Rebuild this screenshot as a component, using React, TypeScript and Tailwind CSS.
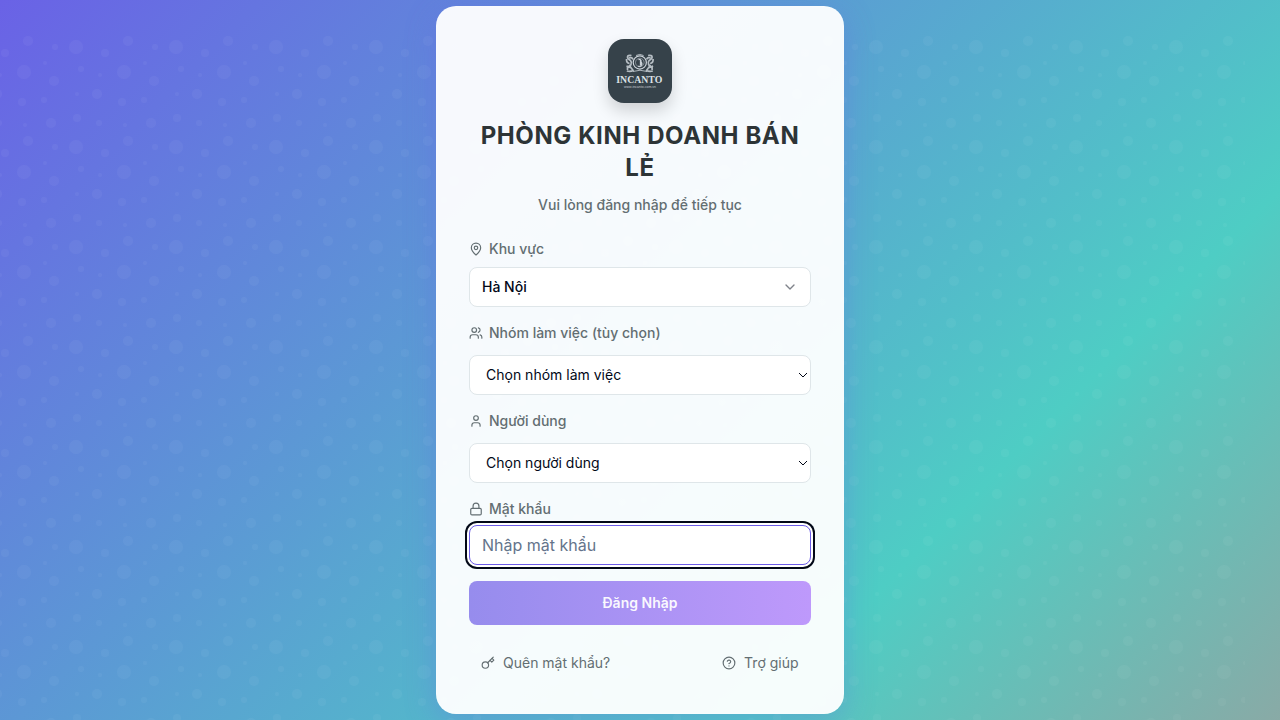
import type { ReactNode } from "react";
import { ChevronDown, CircleHelp, Lock, MapPin, User, Users } from "lucide-react";

const bubbles: [number, number, number][] = [
  [11, 11, 7], [59, 36, 7], [16, 33, 3], [79, 64, 3], [34, 87, 3], [90, 11, 3],
  [12, 82, 4], [40, 17, 4], [63, 5, 5], [57, 66, 4], [86, 87, 5], [32, 58, 5],
  [89, 45, 5], [80, 27, 2], [60, 89, 2], [35, 39, 2], [12, 58, 2],
];

function Bubbles() {
  return (
    <svg className="absolute left-[-35.5px] top-[35.5px] h-[720px] w-[1280px]" aria-hidden="true">
      <defs>
        <pattern id="bubbles" width="100" height="100" patternUnits="userSpaceOnUse">
          {bubbles.map(([x, y, r]) => (
            <circle key={`${x}-${y}`} cx={x} cy={y} r={r} fill="#ffffff" fillOpacity="0.038" />
          ))}
        </pattern>
      </defs>
      <rect width="1280" height="720" fill="url(#bubbles)" />
    </svg>
  );
}

function Logo() {
  return (
    <svg viewBox="0 0 64 64" className="size-16 rounded-2xl bg-[#36424a] shadow-[0_8px_16px_rgba(0,0,0,0.16)]">
      <g fill="none" stroke="#cbd2d8" strokeWidth="1">
        <circle cx="31.8" cy="23.5" r="6.6" strokeWidth="1.2" />
        <circle cx="31.8" cy="23.5" r="4.3" strokeWidth="0.7" opacity="0.7" />
        <path d="M30.500 20.500q3-.5 2.500 2.500q2 2-.5 4.200q-1.500.6-2.200-.4M32.500 21v5" strokeWidth="1.3" />
        <path d="M23.500 16.500q-4-.5-4 1.500t3 3.500q1.500 2 .5 4t-3 3M21 19q3-1 4 1.300M18.500 20q-.3 4 3 4.500M18.500 27l5 2M21 26l4.500 6M18.800 32q3.500 1 6.500-.5M19.500 28v3" strokeWidth="1.7" opacity="0.85" />
        <path d="M40.100 16.500q4-.5 4 1.500t-3 3.500q-1.500 2-.5 4t3 3M42.600 19q-3-1-4 1.300M45.100 20q.3 4-3 4.500M45.100 27l-5 2M42.600 26l-4.500 6M44.800 32q-3.500 1-6.500-.5M44.100 28v3" strokeWidth="1.7" opacity="0.85" />
        <path d="M25 32.500q7-2.500 14 0M28 16.500q3.800-2.200 7.600 0" opacity="0.8" />
      </g>
      <text x="8.3" y="43.7" textLength="46" lengthAdjust="spacingAndGlyphs" fill="#dce1e5" className="font-['Liberation_Serif',serif] text-[11px] font-bold">INCANTO</text>
      <text x="16" y="48.5" textLength="32" lengthAdjust="spacingAndGlyphs" fill="#c3cacf" className="font-['Liberation_Sans',sans-serif] text-[3.5px]">www.incanto.com.vn</text>
    </svg>
  );
}

function KeyIcon() {
  return (
    <svg viewBox="0 0 24 24" className="size-3.5 shrink-0" fill="none" stroke="currentColor" strokeWidth="2" strokeLinecap="round" strokeLinejoin="round" aria-hidden="true">
      <circle cx="7.5" cy="15.5" r="5.5" />
      <path d="m21 2-9.6 9.6" />
      <path d="m15.5 7.5 3 3L22 7l-3-3" />
    </svg>
  );
}

function Label({ icon, children }: { icon: ReactNode; children: ReactNode }) {
  return (
    <label className="flex h-5 items-center gap-1.5 text-sm font-medium text-[#636e72]">
      {icon}
      {children}
    </label>
  );
}

function NativeSelect({ option }: { option: string }) {
  return (
    <div className="mt-3 grid items-center">
      <select className="col-start-1 row-start-1 h-10 w-full appearance-none rounded-lg border border-[#dfe6e9] bg-white px-4 text-sm text-[#020817] outline-none">
        <option>{option}</option>
      </select>
      <svg viewBox="0 0 10 6" className="pointer-events-none col-start-1 row-start-1 mr-[3.5px] h-1.5 w-2.5 justify-self-end" aria-hidden="true">
        <path d="M1 1l4 4 4-4" fill="none" stroke="#020817" strokeWidth="1" />
      </svg>
    </div>
  );
}

const iconClass = "size-3.5 shrink-0";

export default function App() {
  return (
    <main className="relative flex h-[720px] w-full items-center justify-center overflow-hidden bg-[linear-gradient(135deg,#6a62e6_0%,#4ecdc4_73.5%,#89aaa6_100%)] font-['Inter',sans-serif] antialiased">
      <Bubbles />
      <section className="relative h-[708px] w-[408px] rounded-[20px] border border-white/20 bg-white/95 p-8 shadow-[0_8px_32px_rgba(108,92,231,0.3)]">
        <header className="flex flex-col items-center text-center">
          <Logo />
          <h1 className="mt-[17px] text-2xl/8 font-bold tracking-[0.025em] text-[#2d3436]">PHÒNG KINH DOANH BÁN LẺ</h1>
          <p className="mt-[11px] text-sm font-medium text-[#636e72]">Vui lòng đăng nhập để tiếp tục</p>
        </header>
        <form className="mt-6">
          <Label icon={<MapPin className={iconClass} />}>Khu vực</Label>
          <button type="button" className="mt-2 flex h-10 w-full items-center justify-between rounded-lg border border-[#dfe6e9] bg-white px-3 text-sm font-medium text-[#020817]">
            Hà Nội
            <ChevronDown className="size-4 text-[#020817] opacity-50" />
          </button>
          <div className="mt-4">
            <Label icon={<Users className={iconClass} />}>Nhóm làm việc (tùy chọn)</Label>
            <NativeSelect option="Chọn nhóm làm việc" />
          </div>
          <div className="mt-4">
            <Label icon={<User className={iconClass} />}>Người dùng</Label>
            <NativeSelect option="Chọn người dùng" />
          </div>
          <div className="mt-4">
            <Label icon={<Lock className={iconClass} />}>Mật khẩu</Label>
            <input
              type="password"
              placeholder="Nhập mật khẩu"
              className="mt-1.5 block h-10 w-full rounded-lg border border-[#6c5ce7] bg-white px-3 text-base text-[#020817] shadow-[0_0_0_2px_#ffffff,0_0_0_4px_#020817] outline-none placeholder:text-[#64748b]"
            />
          </div>
          <button type="button" className="mt-4 h-11 w-full rounded-lg bg-[linear-gradient(90deg,#968ced,#be99fb)] text-sm font-semibold text-white/95">
            Đăng Nhập
          </button>
        </form>
        <footer className="mt-7 flex justify-between pr-[12.5px] pl-3 text-sm text-[#636e72]">
          <span className="flex items-center gap-2"><KeyIcon />Quên mật khẩu?</span>
          <span className="flex items-center gap-2"><CircleHelp className={iconClass} />Trợ giúp</span>
        </footer>
      </section>
    </main>
  );
}
